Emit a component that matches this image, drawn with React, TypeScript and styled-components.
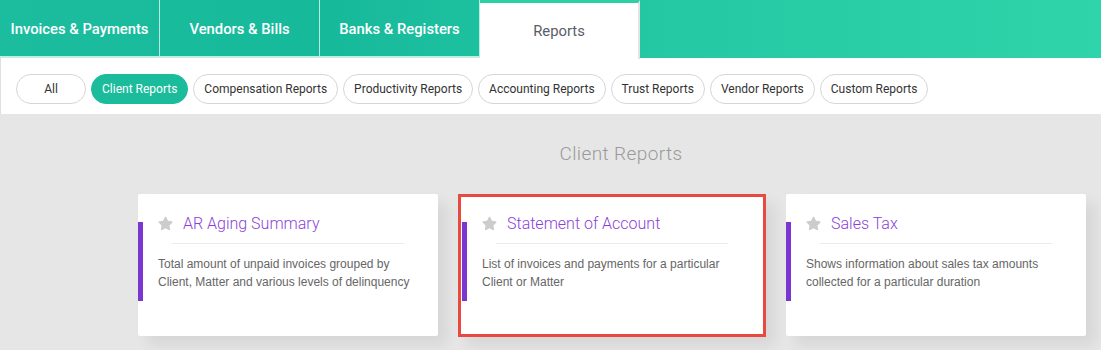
import React from "react";
import styled, { createGlobalStyle, css } from "styled-components";
import { FaStar } from "react-icons/fa";

const GlobalStyle = createGlobalStyle`
  html, body {
    margin: 0;
    padding: 0;
    background: #e6e6e6;
    font-family: Roboto, "Noto Sans", sans-serif;
  }
`;

const Page = styled.div`
  width: 1101px;
  height: 350px;
  overflow: hidden;
  background: #e6e6e6;
`;

const TopBar = styled.nav`
  display: flex;
  height: 58px;
  background: linear-gradient(90deg, #1cbd9f 0%, #17b99b 30%, #24c8a3 60%, #2fd4aa 100%);
`;

const Tab = styled.div<{ $active?: boolean }>`
  box-sizing: border-box;
  width: 160px;
  display: flex;
  align-items: center;
  justify-content: center;
  font-size: 14.8px;
  font-weight: 500;
  color: #ffffff;
  border-right: 1px solid rgba(255, 255, 255, 0.7);
  border-bottom: 2px solid #c2eee1;
  padding-top: 2px;
  ${({ $active }) =>
    $active &&
    css`
      height: 59px;
      background: #ffffff;
      color: #5a5d66;
      font-weight: 400;
      border-top: 3px solid #2ccfa6;
      border-right: 2px solid #e3e3e3;
      border-bottom: none;
      padding-top: 0;
    `}
`;

const FilterBar = styled.div`
  display: flex;
  gap: 5px;
  background: #ffffff;
  border-left: 1px solid #e0e0e0;
  padding: 16px 15px 10px;
`;

const Pill = styled.button<{ $active?: boolean }>`
  box-sizing: border-box;
  height: 30px;
  min-width: 70px;
  padding: 0 10px;
  border-radius: 15px;
  border: 1px solid #d6d6d6;
  background: #ffffff;
  color: #333333;
  font-family: Roboto, sans-serif;
  font-size: 12px;
  ${({ $active }) =>
    $active &&
    css`
      background: #1abc9c;
      border-color: #1abc9c;
      color: #ffffff;
    `}
`;

const SectionTitle = styled.h2`
  margin: 0;
  padding: 29px 0 0 141px;
  text-align: center;
  font-size: 19px;
  line-height: 22px;
  font-weight: 300;
  letter-spacing: 0.4px;
  color: #9a9a9a;
`;

const CardRow = styled.div`
  display: flex;
  gap: 20px;
  padding: 29px 0 0 138px;
`;

const Card = styled.div<{ $selected?: boolean }>`
  position: relative;
  box-sizing: border-box;
  width: 300px;
  height: 142px;
  flex-shrink: 0;
  background: #ffffff;
  border-radius: 2px;
  padding: 19px 20px 0;
  box-shadow: 9px 9px 14px rgba(0, 0, 0, 0.07);
  &::before {
    content: "";
    position: absolute;
    left: 0;
    top: 28px;
    width: 5px;
    height: 79px;
    background: #7b35d0;
  }
  ${({ $selected }) =>
    $selected &&
    css`
      width: 308px;
      height: 143px;
      border-radius: 0;
      border: 3px solid #e84a40;
      padding: 16px 21px 0 21px;
      &::before {
        left: 1px;
        top: 25px;
      }
    `}
`;

const CardHeader = styled.div`
  display: flex;
  align-items: center;
  gap: 10px;
  height: 20px;
`;

const CardTitle = styled.span`
  font-size: 16px;
  color: #8b3fd9;
  font-weight: 300;
`;

const Divider = styled.hr`
  margin: 10px 14px 0;
  border: none;
  height: 1px;
  background: #ebebeb;
`;

const CardText = styled.p`
  margin: 11px 0 0;
  font-family: "Liberation Sans", Arial, sans-serif;
  font-size: 12px;
  line-height: 18px;
  color: #666666;
`;

const tabs = ["Invoices & Payments", "Vendors & Bills", "Banks & Registers", "Reports"];
const filters = [
  "All",
  "Client Reports",
  "Compensation Reports",
  "Productivity Reports",
  "Accounting Reports",
  "Trust Reports",
  "Vendor Reports",
  "Custom Reports",
];
const reports = [
  {
    title: "AR Aging Summary",
    text: "Total amount of unpaid invoices grouped by Client, Matter and various levels of delinquency",
  },
  {
    title: "Statement of Account",
    text: "List of invoices and payments for a particular Client or Matter",
    selected: true,
  },
  {
    title: "Sales Tax",
    text: "Shows information about sales tax amounts collected for a particular duration",
  },
];

export default function App() {
  return (
    <Page>
      <GlobalStyle />
      <TopBar>
        {tabs.map((t) => (
          <Tab key={t} $active={t === "Reports"}>
            {t}
          </Tab>
        ))}
      </TopBar>
      <FilterBar>
        {filters.map((f) => (
          <Pill key={f} $active={f === "Client Reports"}>
            {f}
          </Pill>
        ))}
      </FilterBar>
      <SectionTitle>Client Reports</SectionTitle>
      <CardRow>
        {reports.map((r) => (
          <Card key={r.title} $selected={r.selected}>
            <CardHeader>
              <FaStar size={15} color="#cccccc" />
              <CardTitle>{r.title}</CardTitle>
            </CardHeader>
            <Divider />
            <CardText>{r.text}</CardText>
          </Card>
        ))}
      </CardRow>
    </Page>
  );
}
